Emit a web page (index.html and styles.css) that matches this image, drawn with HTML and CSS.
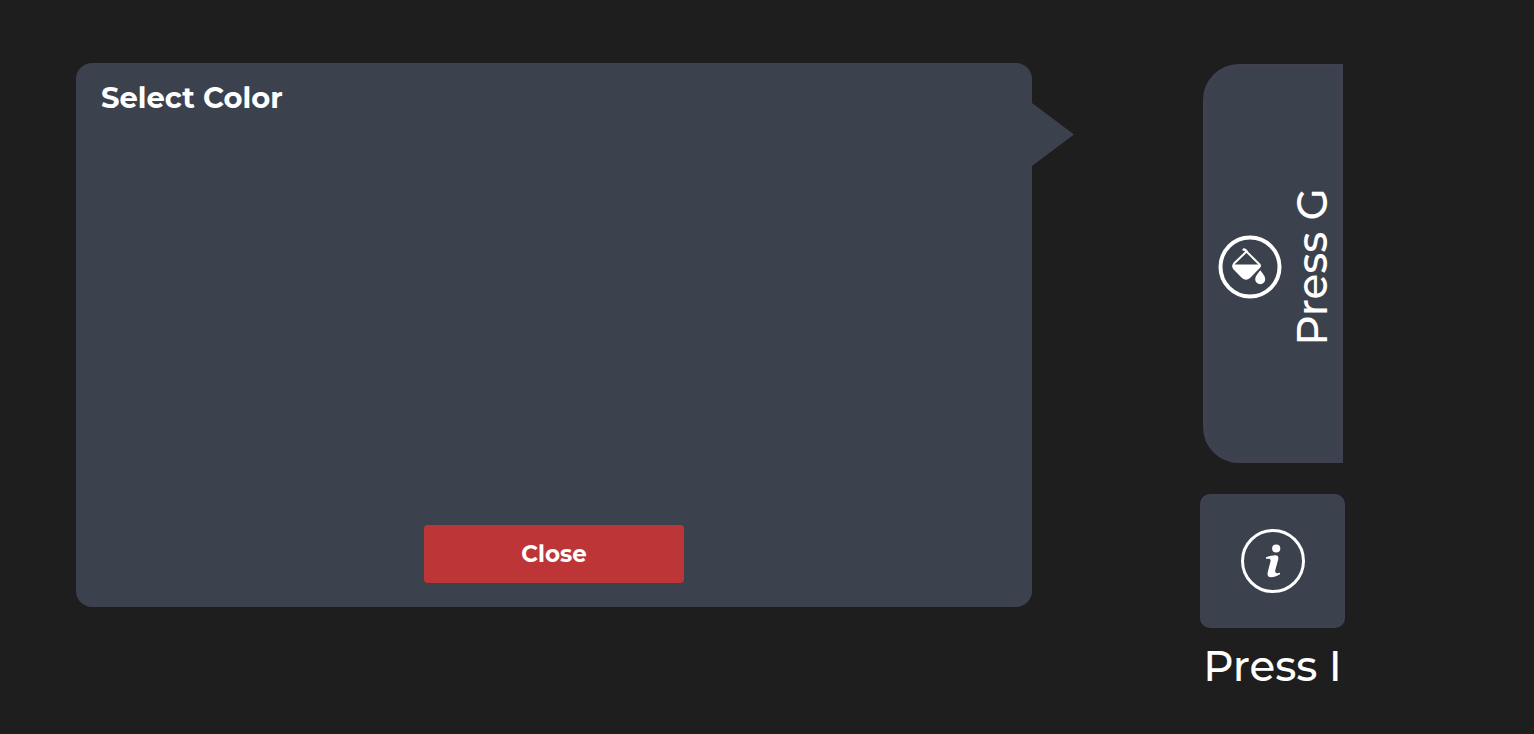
FILE: index.html
```html
<!DOCTYPE html>
<html lang="en">
<head>
<meta charset="utf-8">
<meta name="viewport" content="width=device-width, initial-scale=1">
<title>Select Color</title>
<link rel="stylesheet" href="styles.css">
</head>
<body>
<main class="screen">
  <section class="panel" aria-labelledby="panel-title">
    <h1 class="panel-title" id="panel-title">Select Color</h1>
    <button class="close-button" type="button">Close</button>
  </section>
  <aside class="hints">
    <button class="paint-tab" type="button">
      <svg class="icon" viewBox="0 0 64 64" aria-hidden="true">
        <circle cx="32" cy="32" r="29.5" fill="none" stroke="#fff" stroke-width="4"/>
        <path d="M27.500 15.500L41.300 29.300Q42.600 30.700 41.300 32L31.600 42Q28 45.500 24.400 42L16.300 33.800Q14 31 16.300 28.300L27.500 17.500" fill="none" stroke="#fff" stroke-width="2" stroke-linecap="round" stroke-linejoin="round"/>
        <path d="M25.600 14.600Q26.800 14 27.600 15.400L28.800 16.800" fill="none" stroke="#fff" stroke-width="2.400" stroke-linecap="round"/>
        <path d="M15 29.600H42L40.800 32.500L31.600 42Q28 45.500 24.400 42L16.300 33.800Z" fill="#fff"/>
        <path d="M42.300 35.300C44.500 38.500 47.200 41 47.200 44.200A5 5 0 0 1 37.200 44.200C37.200 41 40 38.500 42.300 35.300Z" fill="#fff"/>
      </svg>
      <span class="tab-label">Press G</span>
    </button>
    <div class="info">
      <button class="info-button" type="button" aria-labelledby="info-label">
        <svg class="icon" viewBox="0 0 64 64" aria-hidden="true">
          <circle cx="32" cy="32" r="30.500" fill="none" stroke="#fff" stroke-width="3"/>
          <circle cx="35.200" cy="19.500" r="4.100" fill="#fff"/>
          <path d="M25 28.200C28.500 27 32 26.200 34.500 26.200C37.200 26.200 37.800 28.200 37.200 30.500L34.400 40.800C33.700 43.800 34.600 44.700 39 43.800V45.300C35.800 47.300 32.500 48.200 30.200 48.200C27 48.200 26 46.300 26.800 43L29.400 32.800C30 30.200 29.500 29.200 25 29.800Z" fill="#fff"/>
        </svg>
      </button>
      <span class="info-label" id="info-label">Press I</span>
    </div>
  </aside>
</main>
</body>
</html>
```
FILE: styles.css
```css
* {
  box-sizing: border-box;
}

body {
  margin: 0;
  background: #1e1e1e;
  color: #fff;
  font-family: Montserrat, Inter, "Open Sans", sans-serif;
}

button {
  margin: 0;
  border: 0;
  color: inherit;
  font: inherit;
  cursor: pointer;
}

.screen {
  display: flex;
  align-items: flex-start;
  gap: 168px;
  padding: 63px 189px 0 76px;
}

.panel {
  position: relative;
  display: flex;
  flex: 1;
  flex-direction: column;
  align-items: center;
  justify-content: space-between;
  min-height: 544px;
  padding: 16px 25px 24px;
  border-radius: 16px;
  background: #3c414e;
}

.panel::after {
  content: "";
  position: absolute;
  top: 40px;
  left: 100%;
  width: 42px;
  height: 63px;
  background: #3c414e;
  clip-path: polygon(0 0, 100% 50%, 0 100%);
}

.panel-title {
  align-self: flex-start;
  margin: 0;
  font-size: 29px;
  font-weight: 700;
  line-height: 38px;
}

.close-button {
  width: 260px;
  padding: 14px 24px;
  border-radius: 4px;
  background: #be3537;
  font-size: 23px;
  font-weight: 700;
  line-height: 30px;
}

.hints {
  display: flex;
  flex-direction: column;
  align-items: center;
  gap: 31px;
  width: 145px;
  padding-top: 1px;
}

.paint-tab {
  display: flex;
  align-items: center;
  justify-content: center;
  gap: 4px;
  width: 140px;
  min-height: 399px;
  padding: 6px 0 0 10px;
  border: 4px solid #3f4151;
  border-radius: 36px 0 0 36px;
  background: #3c414e;
}

.icon {
  display: block;
  flex: none;
  width: 64px;
  height: 64px;
}

.tab-label {
  font-size: 42px;
  font-weight: 500;
  line-height: 52px;
  writing-mode: vertical-rl;
  transform: rotate(180deg);
}

.info {
  display: flex;
  flex-direction: column;
  align-items: center;
  gap: 12px;
  width: 100%;
}

.info-button {
  display: flex;
  align-items: center;
  justify-content: center;
  width: 100%;
  padding: 33px;
  border: 2px solid #3f4151;
  border-radius: 10px;
  background: #3c414e;
}

.info-label {
  font-size: 42px;
  font-weight: 500;
  line-height: 52px;
  white-space: nowrap;
}
```
